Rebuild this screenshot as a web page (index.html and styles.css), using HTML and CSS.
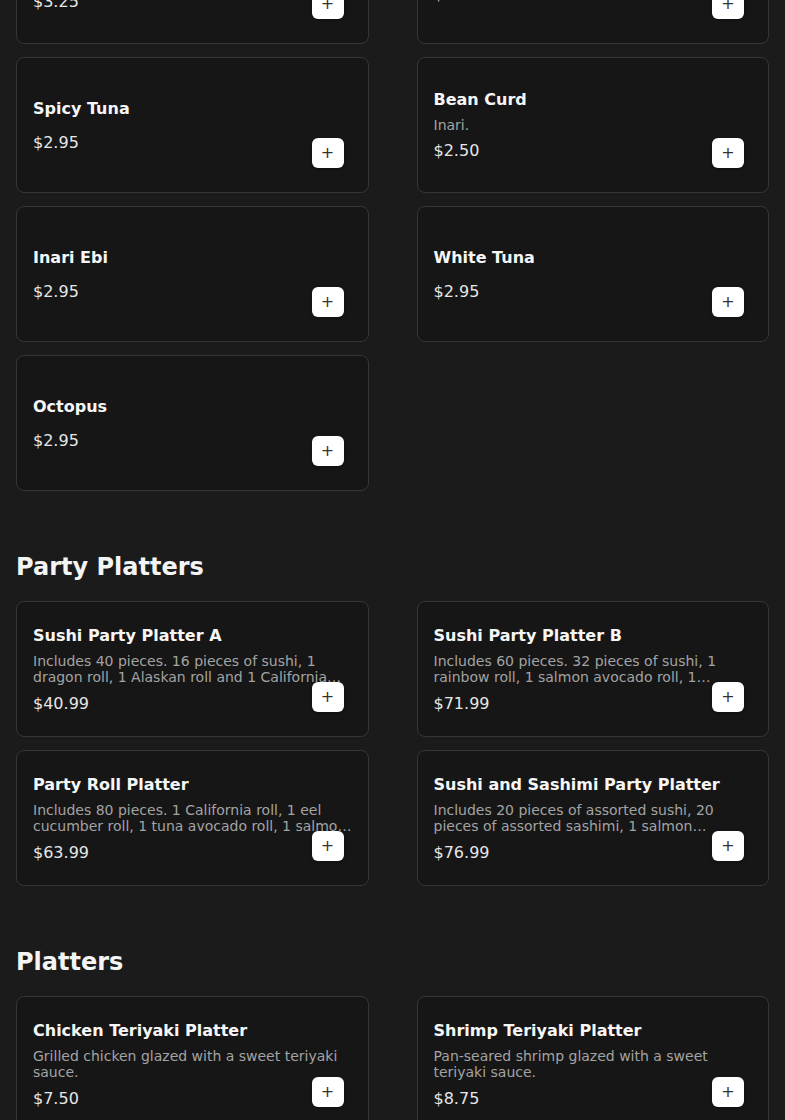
FILE: index.html
```html
<!DOCTYPE html>
<html lang="en">
<head>
<meta charset="utf-8">
<title>Menu</title>
<link rel="stylesheet" href="styles.css">
</head>
<body>
<main class="menu">
  <section class="section">
    <div class="grid">
      <article class="card">
        <div class="item-name">Tamago</div>
        <div class="item-desc">Sweet egg omelet.</div>
        <div class="item-price">$3.25</div>
        <button class="add-btn" type="button">+</button>
      </article>
      <article class="card">
        <div class="item-name">Salmon Roe</div>
        <div class="item-price">$3.50</div>
        <button class="add-btn" type="button">+</button>
      </article>
      <article class="card">
        <div class="item-name">Spicy Tuna</div>
        <div class="item-price">$2.95</div>
        <button class="add-btn" type="button">+</button>
      </article>
      <article class="card">
        <div class="item-name">Bean Curd</div>
        <div class="item-desc">Inari.</div>
        <div class="item-price">$2.50</div>
        <button class="add-btn" type="button">+</button>
      </article>
      <article class="card">
        <div class="item-name">Inari Ebi</div>
        <div class="item-price">$2.95</div>
        <button class="add-btn" type="button">+</button>
      </article>
      <article class="card">
        <div class="item-name">White Tuna</div>
        <div class="item-price">$2.95</div>
        <button class="add-btn" type="button">+</button>
      </article>
      <article class="card">
        <div class="item-name">Octopus</div>
        <div class="item-price">$2.95</div>
        <button class="add-btn" type="button">+</button>
      </article>
    </div>
  </section>

  <section class="section">
    <h2 class="section-title">Party Platters</h2>
    <div class="grid">
      <article class="card">
        <div class="item-name">Sushi Party Platter A</div>
        <div class="item-desc">Includes 40 pieces. 16 pieces of sushi, 1 dragon roll, 1 Alaskan roll and 1 California roll.</div>
        <div class="item-price">$40.99</div>
        <button class="add-btn" type="button">+</button>
      </article>
      <article class="card">
        <div class="item-name">Sushi Party Platter B</div>
        <div class="item-desc">Includes 60 pieces. 32 pieces of sushi, 1 rainbow roll, 1 salmon avocado roll, 1 California roll and 1 spicy tuna roll.</div>
        <div class="item-price">$71.99</div>
        <button class="add-btn" type="button">+</button>
      </article>
      <article class="card">
        <div class="item-name">Party Roll Platter</div>
        <div class="item-desc">Includes 80 pieces. 1 California roll, 1 eel cucumber roll, 1 tuna avocado roll, 1 salmon avocado roll and more.</div>
        <div class="item-price">$63.99</div>
        <button class="add-btn" type="button">+</button>
      </article>
      <article class="card">
        <div class="item-name">Sushi and Sashimi Party Platter</div>
        <div class="item-desc">Includes 20 pieces of assorted sushi, 20 pieces of assorted sashimi, 1 salmon avocado roll and 1 California roll.</div>
        <div class="item-price">$76.99</div>
        <button class="add-btn" type="button">+</button>
      </article>
    </div>
  </section>

  <section class="section">
    <h2 class="section-title">Platters</h2>
    <div class="grid">
      <article class="card">
        <div class="item-name">Chicken Teriyaki Platter</div>
        <div class="item-desc">Grilled chicken glazed with a sweet teriyaki sauce.</div>
        <div class="item-price">$7.50</div>
        <button class="add-btn" type="button">+</button>
      </article>
      <article class="card">
        <div class="item-name">Shrimp Teriyaki Platter</div>
        <div class="item-desc">Pan-seared shrimp glazed with a sweet teriyaki sauce.</div>
        <div class="item-price">$8.75</div>
        <button class="add-btn" type="button">+</button>
      </article>
    </div>
  </section>
</main>
</body>
</html>
```

FILE: styles.css
```css
html, body {
  margin: 0;
  padding: 0;
  background: #1b1b1b;
}

body {
  font-family: "DejaVu Sans", Verdana, sans-serif;
  color: #f2f2f2;
  overflow: hidden;
}

.menu {
  padding: 0 16px 40px;
  margin-top: -92px;
  display: flex;
  flex-direction: column;
  gap: 58px;
}

.section-title {
  margin: 0 0 16px;
  font-size: 24px;
  line-height: 36px;
  font-weight: bold;
  color: #f4f4f4;
}

.grid {
  display: grid;
  grid-template-columns: 1fr 1fr;
  column-gap: 48px;
  row-gap: 13px;
}

.card {
  position: relative;
  box-sizing: border-box;
  min-height: 136px;
  padding: 17px 16px 16px;
  border: 1px solid #363636;
  border-radius: 8px;
  background: #161616;
  display: flex;
  flex-direction: column;
  justify-content: center;
}

.item-name {
  font-size: 16px;
  line-height: 24px;
  font-weight: bold;
  color: #f6f6f6;
  margin-bottom: 5px;
}

.item-desc {
  font-size: 14px;
  line-height: 16.5px;
  color: #a3a3a3;
  margin-bottom: 5px;
  display: -webkit-box;
  -webkit-line-clamp: 2;
  -webkit-box-orient: vertical;
  overflow: hidden;
}

.item-name + .item-price {
  margin-top: 5px;
}

.item-price {
  font-size: 16px;
  line-height: 24px;
  margin-top: 1px;
  color: #e6e6e6;
}

.add-btn {
  position: absolute;
  right: 24px;
  bottom: 24px;
  width: 32px;
  height: 30px;
  padding: 0;
  border: none;
  border-radius: 6px;
  background: #ffffff;
  color: #333333;
  font-family: "DejaVu Sans", sans-serif;
  font-size: 16px;
  line-height: 30px;
  text-align: center;
  box-shadow: 0 1px 3px rgba(0, 0, 0, 0.4);
}
```
